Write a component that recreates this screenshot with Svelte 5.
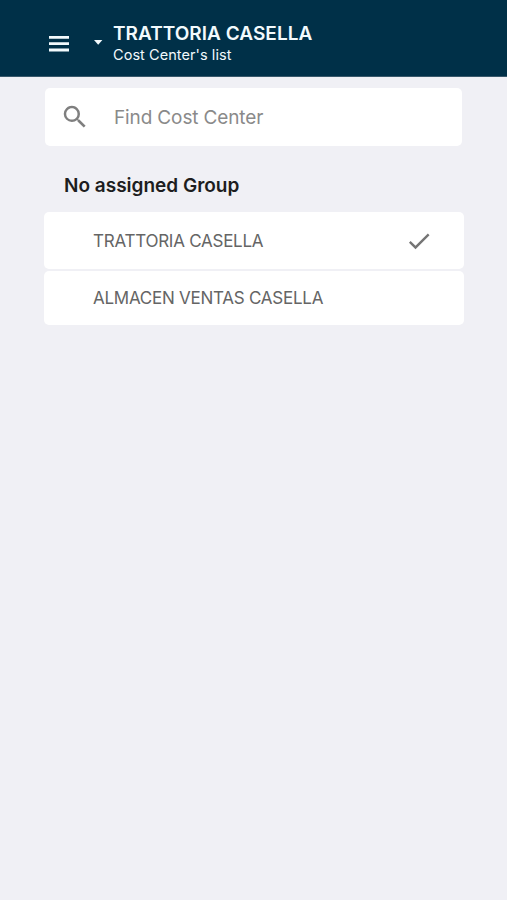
<script>
  let selected = "TRATTORIA CASELLA";
  let searchTerms = "";

  const costCenters = ["TRATTORIA CASELLA", "ALMACEN VENTAS CASELLA"];

  $: visible = costCenters.filter(name =>
    name.toLowerCase().includes(searchTerms.toLowerCase())
  );
</script>

<style>
  :global(body) {
    background-color: #f0f0f5;
  }

  .page {
    min-height: 900px;
    font-family: Inter, "Liberation Sans", sans-serif;
    background-color: #f0f0f5;
  }

  header {
    display: flex;
    box-sizing: border-box;
    height: 77px;
    padding-left: 49px;
    color: #f2fafd;
    background-color: #003048;
    border-bottom: 1px solid #38586b;
  }

  button {
    padding: 0;
    border: none;
    background: none;
    color: inherit;
    font: inherit;
    cursor: pointer;
  }

  svg {
    display: block;
    fill: currentColor;
  }

  .menu {
    align-self: flex-start;
    margin-top: 36px;
  }

  .caret {
    align-self: flex-start;
    margin: 40px 0 0 25px;
  }

  .titles {
    margin: 22px 0 0 10px;
    white-space: nowrap;
  }

  h1 {
    margin: 0;
    font-size: 19px;
    font-weight: 600;
    line-height: 24px;
    letter-spacing: 0.03px;
  }

  .subtitle {
    margin: 0;
    font-size: 14.5px;
    line-height: 18px;
    letter-spacing: 0.06px;
  }

  .search {
    display: flex;
    align-items: center;
    box-sizing: border-box;
    width: 417px;
    height: 58px;
    margin: 11px 0 0 45px;
    padding-left: 15px;
    border-radius: 5px;
    color: #7f7f7f;
    background-color: white;
  }

  input {
    width: 320px;
    margin-left: 24px;
    padding: 0;
    border: none;
    outline: none;
    font-family: inherit;
    font-size: 19px;
    letter-spacing: -0.13px;
    color: #555;
    background: none;
  }

  input::placeholder {
    color: #8a8a8a;
  }

  h2 {
    margin: 28px 0 0 64px;
    font-size: 19px;
    font-weight: 600;
    line-height: 24px;
    color: #1d1d20;
  }

  ul {
    display: grid;
    grid-template-rows: 57px 54px;
    gap: 2px;
    width: 420px;
    margin: 14px 0 0 44px;
    padding: 0;
    list-style: none;
  }

  .item {
    display: flex;
    align-items: center;
    justify-content: space-between;
    box-sizing: border-box;
    width: 100%;
    height: 100%;
    padding: 0 31px 0 49px;
    border-radius: 5px;
    color: #656565;
    background-color: white;
    font-size: 17px;
    letter-spacing: -0.25px;
  }

  .check {
    color: #757575;
  }
</style>

<div class="page">
  <header>
    <button class="menu" aria-label="Menu">
      <svg width="20" height="16" viewBox="0 0 20 16">
        <path d="M0 0h20v2.8H0zM0 6.3h20v2.8H0zM0 12.6h20v2.8H0z" />
      </svg>
    </button>
    <button class="caret" aria-label="Change cost center">
      <svg width="9" height="5" viewBox="0 0 9 5">
        <path d="M0 0h8.4L4.2 4.8z" />
      </svg>
    </button>
    <div class="titles">
      <h1>{selected}</h1>
      <p class="subtitle">Cost Center's list</p>
    </div>
  </header>

  <div class="search">
    <svg width="30" height="30" viewBox="0 0 24 24">
      <path d="M15.5 14h-.79l-.28-.27A6.47 6.47 0 0 0 16 9.5 6.5 6.5 0 1 0 9.5 16c1.61 0 3.09-.59 4.23-1.57l.27.28v.79l5 4.99L20.49 19l-4.99-5zm-6 0C7.01 14 5 11.99 5 9.5S7.01 5 9.5 5 14 7.01 14 9.5 11.99 14 9.5 14z" />
    </svg>
    <input type="text" bind:value={searchTerms} placeholder="Find Cost Center" />
  </div>

  <h2>No assigned Group</h2>
  <ul>
    {#each visible as name}
      <li>
        <button class="item" on:click={() => (selected = name)}>
          <span>{name}</span>
          {#if name === selected}
            <svg class="check" width="28" height="28" viewBox="0 0 24 24">
              <path d="M9 16.17L4.83 12l-1.42 1.41L9 19 21 7l-1.41-1.41z" />
            </svg>
          {/if}
        </button>
      </li>
    {/each}
  </ul>
</div>
